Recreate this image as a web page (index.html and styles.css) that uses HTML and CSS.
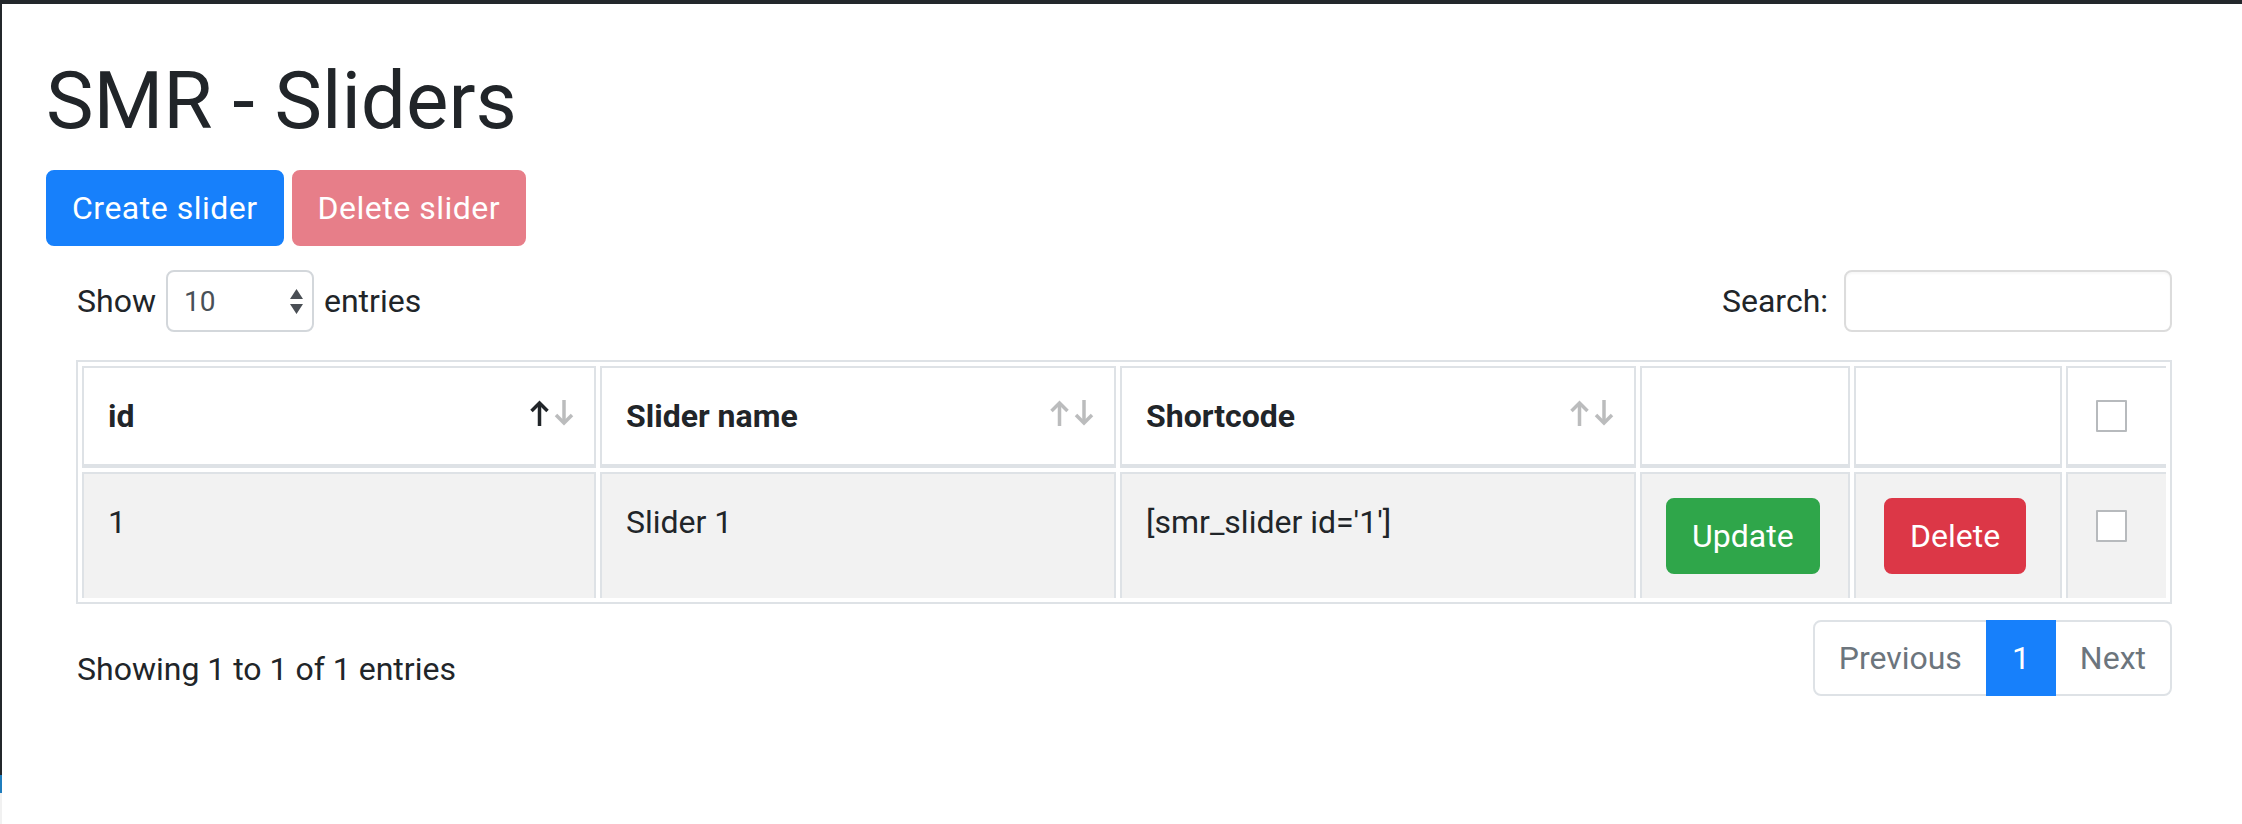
FILE: index.html
```html
<!DOCTYPE html>
<html lang="en">
<head>
<meta charset="utf-8">
<title>SMR - Sliders</title>
<link rel="stylesheet" href="styles.css">
</head>
<body>
<div class="topbar"></div>
<div class="frame">
  <div class="edge">
    <div class="edge-dark"></div>
    <div class="edge-blue"></div>
    <div class="edge-light"></div>
  </div>
  <main class="page">
    <h1 class="title">SMR - Sliders</h1>
    <div class="actions">
      <button class="btn btn-primary btn-top" type="button">Create slider</button>
      <button class="btn btn-danger-disabled btn-top" type="button">Delete slider</button>
    </div>

    <div class="dt-wrapper">
      <div class="dt-top">
        <label class="dt-length">Show
          <span class="select"><span class="select-value">10</span>
            <svg class="select-arrows" width="13" height="25" viewBox="0 0 13 25"><path d="M6.5 0 L13 10 H0 Z M0 15 H13 L6.5 25 Z" fill="#4a4f55"/></svg>
          </span>
          entries</label>
        <label class="dt-search">Search: <span class="search-input"></span></label>
      </div>

      <table class="dt-table">
        <thead>
          <tr>
            <th class="col-id sortable">id
              <svg class="sort-icon" width="46" height="26" viewBox="0 0 46 26"><g fill="none" stroke-width="3.5"><g stroke="#212529"><path d="M9.5 3 V26"/><path d="M1.5 11 L9.5 3 L17.5 11"/></g><g stroke="#212529" opacity="0.3"><path d="M34 0 V23"/><path d="M26 15 L34 23 L42 15"/></g></g></svg>
            </th>
            <th class="col-name sortable">Slider name
              <svg class="sort-icon" width="46" height="26" viewBox="0 0 46 26"><g fill="none" stroke-width="3.5" stroke="#212529" opacity="0.3"><path d="M9.5 3 V26"/><path d="M1.5 11 L9.5 3 L17.5 11"/><path d="M34 0 V23"/><path d="M26 15 L34 23 L42 15"/></g></svg>
            </th>
            <th class="col-code sortable">Shortcode
              <svg class="sort-icon" width="46" height="26" viewBox="0 0 46 26"><g fill="none" stroke-width="3.5" stroke="#212529" opacity="0.3"><path d="M9.5 3 V26"/><path d="M1.5 11 L9.5 3 L17.5 11"/><path d="M34 0 V23"/><path d="M26 15 L34 23 L42 15"/></g></svg>
            </th>
            <th class="col-update"></th>
            <th class="col-delete"></th>
            <th class="col-check"><span class="check check-head"></span></th>
          </tr>
        </thead>
        <tbody>
          <tr>
            <td>1</td>
            <td>Slider 1</td>
            <td>[smr_slider id='1']</td>
            <td><button class="btn btn-success" type="button">Update</button></td>
            <td><button class="btn btn-danger btn-row-delete" type="button">Delete</button></td>
            <td><span class="check check-body"></span></td>
          </tr>
        </tbody>
      </table>

      <div class="dt-bottom">
        <div class="dt-info">Showing 1 to 1 of 1 entries</div>
        <ul class="pagination">
          <li class="page-item disabled"><span class="page-link">Previous</span></li>
          <li class="page-item active"><span class="page-link">1</span></li>
          <li class="page-item disabled"><span class="page-link">Next</span></li>
        </ul>
      </div>
    </div>
  </main>
</div>
</body>
</html>
```

FILE: styles.css
```css
* { box-sizing: border-box; }

html, body {
  margin: 0;
  padding: 0;
  background: #fff;
}

body {
  font-family: Roboto, "Liberation Sans", Arial, sans-serif;
  font-size: 32px;
  line-height: 48px;
  color: #212529;
  width: 2242px;
  height: 824px;
  overflow: hidden;
}

.topbar {
  height: 4px;
  background: #23272b;
}

.frame {
  display: flex;
  height: 820px;
}

.edge {
  width: 2px;
  display: flex;
  flex-direction: column;
}
.edge-dark { flex: 1; background: #23272b; }
.edge-blue { height: 18px; background: #1f7dbd; }
.edge-light { height: 31px; background: #f1f1f1; }

.page {
  flex: 1;
  padding: 49px 40px 0 44px;
}

.title {
  margin: 0 0 21px;
  font-size: 80px;
  line-height: 96px;
  font-weight: 400;
  color: #212529;
}

.actions {
  display: flex;
  gap: 8px;
  margin-bottom: 24px;
}

.btn {
  font-family: inherit;
  font-size: 32px;
  line-height: 48px;
  font-weight: 400;
  padding: 12px 24px;
  border: 2px solid transparent;
  border-radius: 8px;
  color: #fff;
  cursor: pointer;
}
.btn-top {
  padding: 12px 24px;
  letter-spacing: 0.5px;
}
.btn-primary { background: #1780fb; border-color: #1780fb; }
.btn-danger-disabled { background: #e77e89; border-color: #e77e89; }
.btn-success { background: #2fa64a; border-color: #2fa64a; }
.btn-danger { background: #dc3747; border-color: #dc3747; }
.btn-row-delete { margin-left: 4px; }

.dt-wrapper {
  margin: 0 30px;
}

.dt-top {
  display: flex;
  justify-content: space-between;
  align-items: center;
  height: 62px;
  margin-bottom: 28px;
}

.dt-length, .dt-search {
  display: flex;
  align-items: center;
  white-space: nowrap;
}
.dt-length { gap: 10px; margin-left: 1px; }
.dt-search { gap: 16px; }

.select {
  display: flex;
  align-items: center;
  justify-content: space-between;
  width: 148px;
  height: 62px;
  padding: 0 9px 0 16px;
  border: 2px solid #d3d7db;
  border-radius: 8px;
  font-size: 28px;
  line-height: 42px;
  color: #495057;
  background: #fff;
}
.select-value { padding-top: 2px; }

.search-input {
  display: block;
  width: 328px;
  height: 62px;
  border: 2px solid #dcdcdc;
  border-radius: 8px;
  background: #fff;
  box-shadow: inset 0 2px 2px rgba(0, 0, 0, 0.03);
}

.dt-table {
  width: 100%;
  table-layout: fixed;
  border-collapse: separate;
  border-spacing: 4px;
  border: 2px solid #dee2e6;
  margin: 0;
}

.dt-table th,
.dt-table td {
  border: 2px solid #dee2e6;
  text-align: left;
}

.dt-table th {
  position: relative;
  background: #fff;
  border-bottom-width: 4px;
  padding: 24px 24px 24px 24px;
  vertical-align: bottom;
  font-weight: 700;
}
.dt-table th.sortable { padding-right: 60px; }

.dt-table td {
  background: #f2f2f2;
  border-bottom-width: 0;
  padding: 24px;
  vertical-align: top;
}

.dt-table th:last-child,
.dt-table td:last-child { border-right-width: 0; }

.col-id { width: 514px; }
.col-name { width: 516px; }
.col-code { width: 516px; }
.col-update { width: 210px; }
.col-delete { width: 208px; }
.col-check { width: 100px; }

.sort-icon {
  position: absolute;
  right: 18px;
  bottom: 38px;
}

.check {
  display: block;
  width: 31px;
  height: 32px;
  margin-left: 4px;
  border: 2px solid #b7babd;
  border-radius: 1px;
  background: #fff;
}
.check-head { margin-top: 8px; margin-bottom: 8px; }
.check-body { margin-top: 12px; }

.dt-bottom {
  display: flex;
  justify-content: space-between;
  align-items: flex-start;
  margin-top: 12px;
}

.dt-info {
  padding-top: 29px;
  margin-left: 1px;
}

.pagination {
  display: flex;
  list-style: none;
  margin: 4px 0 0;
  padding: 0;
}

.page-link {
  display: block;
  padding: 16px 24px;
  line-height: 40px;
  border: 2px solid #dee2e6;
  margin-left: -2px;
  color: #6c757d;
  background: #fff;
}
.page-item:first-child .page-link {
  margin-left: 0;
  border-radius: 8px 0 0 8px;
}
.page-item:last-child .page-link {
  border-radius: 0 8px 8px 0;
}
.page-item.active .page-link {
  position: relative;
  z-index: 1;
  background: #1780fb;
  border-color: #1780fb;
  color: #fff;
}
```
